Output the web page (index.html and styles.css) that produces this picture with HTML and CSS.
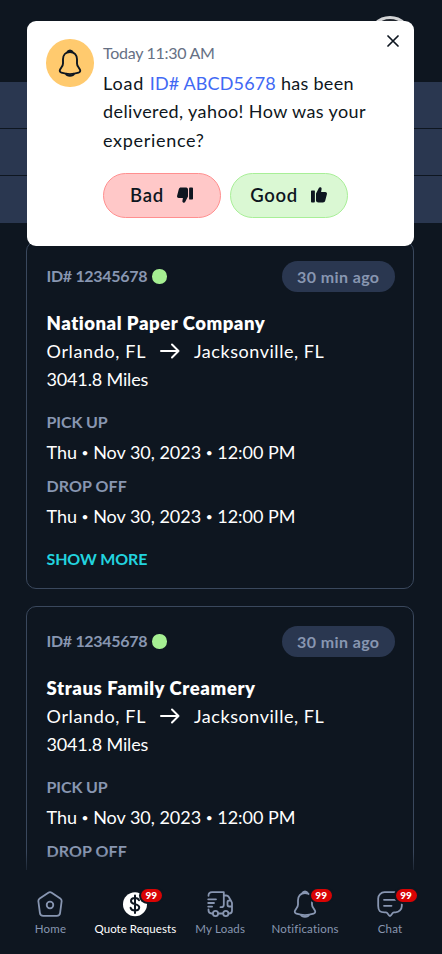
FILE: index.html
```html
<!DOCTYPE html>
<html lang="en">
<head>
<meta charset="utf-8">
<title>Quote Requests</title>
<link rel="stylesheet" href="styles.css">
</head>
<body>
<svg class="defs" width="0" height="0">
  <symbol id="bell" viewBox="0 0 26 28">
    <path d="M10.2 3.3a3 3 0 0 1 5.6 0M13 3c-4.5 0-7 3.2-7 7.2v4.3c0 1.4-.6 2.5-1.5 3.8l-1.4 2.2c-.8 1.5-.2 2.7 1.3 3.2 5.5 1.8 11.700 1.800 17.200 0 1.500-.5 2.100-1.700 1.300-3.200l-1.400-2.200c-.9-1.300-1.500-2.400-1.500-3.800v-4.300C20 6.200 17.500 3 13 3z"/>
    <path d="M9 24.800c.9 2.800 7.100 2.800 8 0"/>
  </symbol>
  <symbol id="arrow" viewBox="0 0 20 16">
    <path d="M1 8h17.500M12 1.500 18.500 8 12 14.500"/>
  </symbol>
  <symbol id="thumb" viewBox="0 0 16 16">
    <path d="M.8 3.400h2.600a.5.5 0 0 1 .5.500v10.700a.9.900 0 0 1-.9.900H.9a.9.900 0 0 1-.9-.9V4.200a.8.800 0 0 1 .8-.8zM5 6.500 8 .8C8.500-.1 10.800.2 10.600 2L10.100 5H14.300c1.200 0 1.900 1 1.600 2.200l-1.700 6.600c-.3 1-1.100 1.700-2.200 1.700H7.500c-1.300 0-2.500-.6-2.500-1.900z"/>
  </symbol>
</svg>
<main class="screen">
  <header class="top"><div class="avatar"></div></header>
  <div class="rows"><div></div><div></div><div></div></div>
  <section class="list">
    <article class="card">
      <div class="card-head"><span class="load-id">ID# 12345678</span><i class="dot"></i><span class="ago">30 min ago</span></div>
      <h2 class="company">National Paper Company</h2>
      <div class="route"><span class="from">Orlando, FL</span><svg class="arrow"><use href="#arrow"/></svg><span class="to">Jacksonville, FL</span></div>
      <div class="miles">3041.8 Miles</div>
      <div class="label">PICK UP</div>
      <div class="time">Thu <small>•</small> Nov 30, 2023 <small>•</small> 12:00 PM</div>
      <div class="label drop">DROP OFF</div>
      <div class="time">Thu <small>•</small> Nov 30, 2023 <small>•</small> 12:00 PM</div>
      <a class="more">SHOW MORE</a>
    </article>
    <article class="card">
      <div class="card-head"><span class="load-id">ID# 12345678</span><i class="dot"></i><span class="ago">30 min ago</span></div>
      <h2 class="company straus">Straus Family Creamery</h2>
      <div class="route"><span class="from">Orlando, FL</span><svg class="arrow"><use href="#arrow"/></svg><span class="to">Jacksonville, FL</span></div>
      <div class="miles">3041.8 Miles</div>
      <div class="label">PICK UP</div>
      <div class="time">Thu <small>•</small> Nov 30, 2023 <small>•</small> 12:00 PM</div>
      <div class="label drop">DROP OFF</div>
    </article>
  </section>
</main>
<nav class="tabs">
  <a class="tab"><span class="icon"><svg viewBox="0 0 26 26"><path d="M11.300 1.700a3 3 0 0 1 3.400 0l8.600 5.800c1 .7 1.500 1.800 1.300 3l-1.500 11.300a3.400 3.400 0 0 1-3.400 3H6.300a3.400 3.400 0 0 1-3.400-3L1.400 10.500c-.2-1.200.3-2.300 1.300-3z"/><circle cx="13" cy="14" r="3.300"/></svg></span>Home</a>
  <a class="tab active"><span class="icon"><svg viewBox="0 0 26 26"><circle class="coin" cx="13" cy="13.200" r="12"/><path class="dollar" d="M17 9.300c-.5-1.600-2-2.400-4-2.400-2.300 0-4 1.100-4 3 0 4.400 8.200 2 8.200 6.400 0 2-1.800 3.200-4.200 3.200-2.300 0-4-1-4.400-2.800M13 4.500v17.500"/></svg><b class="badge">99</b></span>Quote Requests</a>
  <a class="tab"><span class="icon"><svg viewBox="0 0 26 26"><path d="M1.500 4.800C1.500 2.500 3 1.200 5 1.200h11.800v12.500c0 1.500-1 2.500-2.500 2.500h-.800M16.800 4.500h2.400c1.200 0 2 .5 2.600 1.500l2.700 4.700c.4.600.5 1.200.5 1.900v6.900c0 1.800-1 3-2.800 3h-.4M1.500 18.500v.8c0 2 1.200 3.200 3.200 3.200h1M11.500 22.500h4.500M1.200 8.300h7.800M1.200 12h5.800M1.200 15.600h3.900M24.800 15.500h-2.600c-1 0-1.700-.7-1.700-1.700v-2.600c0-1 .7-1.700 1.700-1.700h1.500"/><circle cx="8.500" cy="22.500" r="2.600"/><circle cx="18.800" cy="22.500" r="2.600"/></svg></span>My Loads</a>
  <a class="tab"><span class="icon"><svg class="tab-bell"><use href="#bell"/></svg><b class="badge">99</b></span>Notifications</a>
  <a class="tab"><span class="icon"><svg viewBox="0 0 26 26"><path d="M7.500 1.200h11a6.300 6.300 0 0 1 6.300 6.300v7.500a6.300 6.300 0 0 1-6.300 6.300h-1.300c-.6 0-1.100.2-1.500.7l-1.700 2.300c-.6.900-1.500.9-2.100 0L10.200 22c-.3-.4-.9-.7-1.400-.7H7.500c-4.200 0-6.300-1.200-6.300-6.300V7.500a6.300 6.300 0 0 1 6.300-6.300zM7 8.800h12M7 14.800h7.500"/></svg><b class="badge">99</b></span>Chat</a>
</nav>
<div class="dialog" role="dialog">
  <div class="bell-disc"><svg><use href="#bell"/></svg></div>
  <div class="dialog-body">
    <div class="when">Today 11:30 AM</div>
    <p class="message"><span class="word">Load </span><a class="link">ID# ABCD5678</a><span class="has"> has been</span><br>delivered, yahoo! How was your<br><span class="exp">experience?</span></p>
    <div class="actions">
      <button class="bad">Bad<svg class="down"><use href="#thumb"/></svg></button>
      <button class="good">Good<svg><use href="#thumb"/></svg></button>
    </div>
  </div>
  <svg class="close" viewBox="0 0 12 12"><path d="M1 1l10 10M11 1 1 11"/></svg>
</div>
</body>
</html>
```
FILE: styles.css
```css
* { box-sizing: border-box; }
body {
  margin: 0;
  width: 442px;
  height: 954px;
  overflow: hidden;
  position: relative;
  display: flex;
  flex-direction: column;
  background: #0e1620;
  color: #fff;
  font: 18px/28.4px Lato, "Liberation Sans", sans-serif;
}
svg { fill: none; stroke: currentColor; stroke-linecap: round; stroke-linejoin: round; }
.defs { position: absolute; }
.screen { height: 870px; overflow: hidden; }

.top { height: 82px; display: flex; justify-content: flex-end; padding: 15.500px 30px 0; }
.avatar { width: 44px; height: 44px; border-radius: 50%; border: 3px solid #d3d4d6; background: #20252d; }
.rows { display: grid; grid-template-rows: 46px 46px 47px; row-gap: 1px; height: 141.500px; }
.rows div { background: #2a3750; }

.list { display: flex; flex-direction: column; gap: 17px; padding: 17.500px 28px 0 26px; }
.card { height: 348px; padding: 19px 18.500px 0 19.500px; border: 1.500px solid #3a485d; border-radius: 10px; flex: none; }
.card-head { display: flex; align-items: center; height: 31px; margin-bottom: 17px; color: #8896b1; font-size: 16px; font-weight: 700; }
.load-id { letter-spacing: -.3px; width: 105.500px; white-space: nowrap; }
.dot { width: 14.500px; height: 14.500px; border-radius: 50%; background: #a5ef92; }
.ago { margin-left: auto; width: 112.500px; height: 31px; line-height: 31px; border-radius: 16px; background: #2a3750; text-align: center; letter-spacing: .4px; }
.company { margin: 0; font-size: 18.500px; line-height: 28px; font-weight: 800; letter-spacing: .53px; }
.company.straus { letter-spacing: .6px; }
.route { display: flex; align-items: center; height: 27.500px; }
.from { letter-spacing: .65px; width: 113.500px; }
.to { letter-spacing: .55px; margin-left: 14px; }
.arrow { width: 20px; height: 16px; stroke-width: 2; }
.miles { letter-spacing: -.15px; line-height: 28px; }
.label { margin: 17.400px 0 4px; font-size: 16px; line-height: 24px; font-weight: 700; letter-spacing: -.1px; color: #8896b1; }
.label.drop { margin-top: 7.800px; letter-spacing: .1px; }
.time { letter-spacing: -.02px; white-space: nowrap; line-height: 28px; }
.time small { font-size: 12px; line-height: 1; vertical-align: 2.500px; }
.more { display: block; margin-top: 17px; font-size: 16px; line-height: 24px; font-weight: 700; letter-spacing: -.12px; color: #22d3df; }

.tabs { position: relative; height: 84px; display: grid; grid-template-columns: repeat(5, 1fr); padding: 21px 9.500px 0 8px; color: #8896b1; font-size: 11.500px; letter-spacing: .2px; }
.tabs::before { content: ""; position: absolute; left: 0; right: 0; top: -18px; height: 18px; background: linear-gradient(#0e162000, #0e1620b0); }
.tab { display: flex; flex-direction: column; align-items: center; line-height: 16px; gap: 2.500px; white-space: nowrap; }
.tab.active { color: #fff; letter-spacing: .05px; }
.icon { position: relative; width: 26px; height: 27px; }
.icon svg { display: block; width: 26px; height: 26px; stroke-width: 1.800; }
.icon .tab-bell { height: 28px; margin-top: -1px; }
.icon .coin { fill: #fff; stroke: none; }
.dollar { stroke: #0e1620; stroke-width: 2; }
.badge { position: absolute; left: 18.500px; top: -2px; width: 21px; height: 12.500px; border-radius: 6.500px; background: #d80404; color: #fff; font-size: 10px; line-height: 12.500px; font-weight: 900; letter-spacing: 0; text-align: center; box-shadow: 0 0 0 2px #0e1620; }

.dialog { position: absolute; left: 27px; top: 20.500px; width: 386.500px; height: 225.500px; border-radius: 9px; background: #fff; color: #0e1620; display: flex; gap: 9.500px; padding: 18.500px 19px; }
.bell-disc { flex: none; width: 47.500px; height: 47.500px; border-radius: 50%; background: #ffca6e; display: grid; place-items: center; }
.bell-disc svg { width: 26px; height: 28px; stroke-width: 1.900; }
.dialog-body { white-space: nowrap; padding-top: 1.500px; }
.when { color: #667084; font-size: 16px; line-height: 24px; letter-spacing: -.28px; }
.message { margin: 4.500px 0 18.500px; letter-spacing: .4px; }
.word { letter-spacing: .85px; }
.link { color: #4169f4; letter-spacing: .15px; }
.has { letter-spacing: .3px; }
.exp { letter-spacing: .7px; }
.actions { display: flex; gap: 9px; }
.actions button { width: 118px; height: 45px; border-radius: 23px; border: 1.500px solid; padding: 0 1px 0 0; font: 600 18.500px Lato, sans-serif; letter-spacing: .7px; color: #0e1620; display: flex; align-items: center; justify-content: center; gap: 13px; }
.actions svg { width: 16px; height: 16px; fill: currentColor; stroke: none; }
.actions .bad { background: #ffc8c8; border-color: #ff8f8f; }
.actions .good { background: #daf8d3; border-color: #a8ef97; }
.down { transform: rotate(180deg); }
.close { position: absolute; right: 14.500px; top: 14px; width: 12px; height: 12px; stroke-width: 1.700; }
```
